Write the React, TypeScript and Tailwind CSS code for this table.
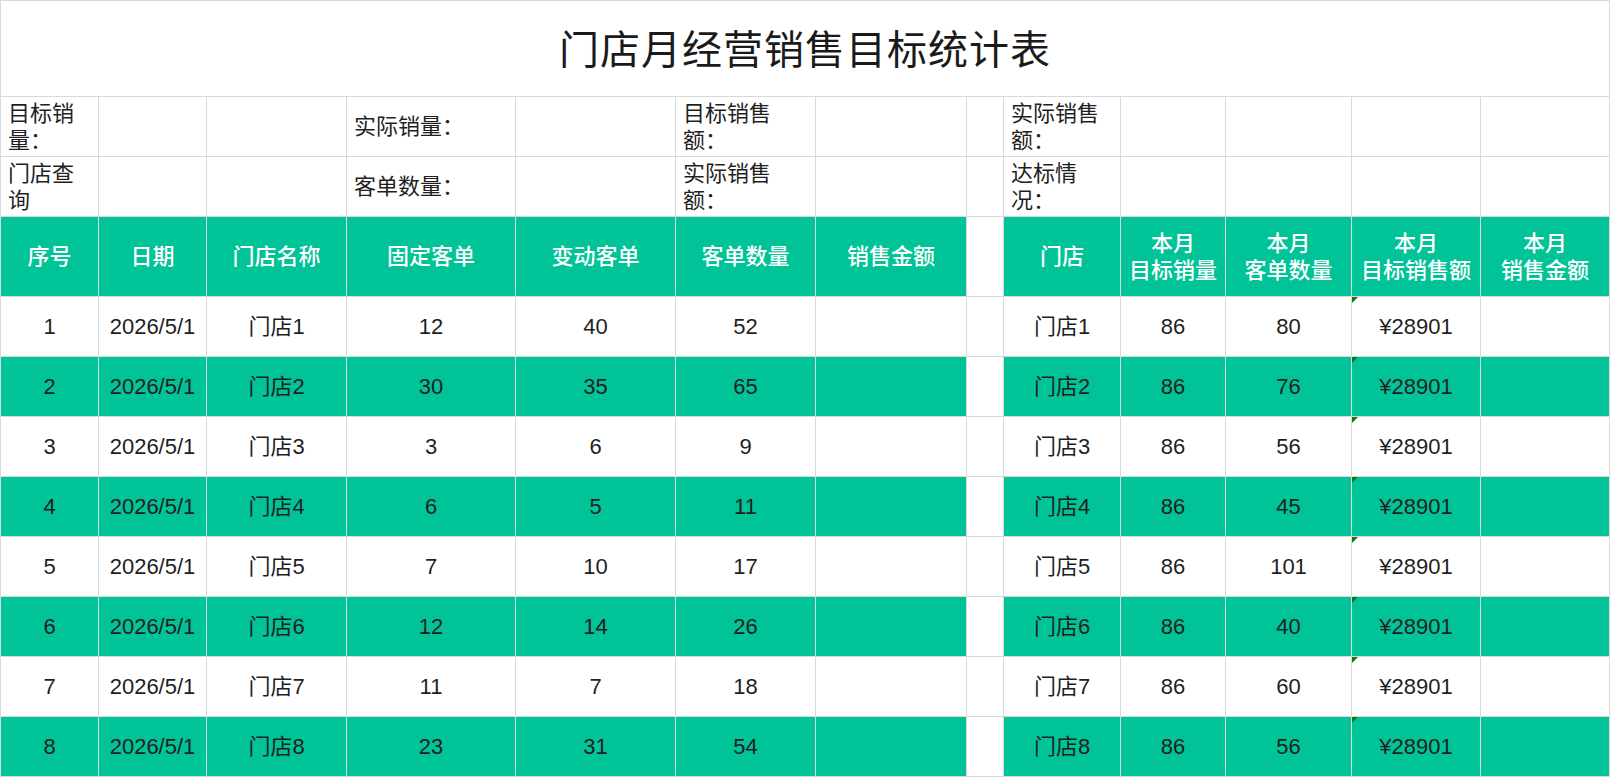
import React from 'react';

const cols =
  'grid-cols-[98px_108px_140px_169px_160px_140px_151px_37px_117px_105px_126px_129px_129px]';

const rows = [
  { no: 1, store: '门店1', fixed: 12, change: 40, count: 52, target: 86, month: 80 },
  { no: 2, store: '门店2', fixed: 30, change: 35, count: 65, target: 86, month: 76 },
  { no: 3, store: '门店3', fixed: 3, change: 6, count: 9, target: 86, month: 56 },
  { no: 4, store: '门店4', fixed: 6, change: 5, count: 11, target: 86, month: 45 },
  { no: 5, store: '门店5', fixed: 7, change: 10, count: 17, target: 86, month: 101 },
  { no: 6, store: '门店6', fixed: 12, change: 14, count: 26, target: 86, month: 40 },
  { no: 7, store: '门店7', fixed: 11, change: 7, count: 18, target: 86, month: 60 },
  { no: 8, store: '门店8', fixed: 23, change: 31, count: 54, target: 86, month: 56 },
];

const headers = ['序号', '日期', '门店名称', '固定客单', '变动客单', '客单数量', '销售金额'];
const rightHeaders = [['门店'], ['本月', '目标销量'], ['本月', '客单数量'], ['本月', '目标销售额'], ['本月', '销售金额']];

function Label({ lines }: { lines?: string[] }) {
  return (
    <div className="border-r border-b border-[#d9d9d9] flex flex-col justify-center pl-[7px] text-[22px] leading-[27px] text-[#1f1f1f]">
      {lines?.map((l) => (
        <span key={l} className="whitespace-nowrap">{l}</span>
      ))}
    </div>
  );
}

function Cell({ children, green, mark }: { children?: React.ReactNode; green?: boolean; mark?: boolean }) {
  return (
    <div
      className={
        'relative border-r border-b border-[#d9d9d9] flex items-center justify-center text-[22px] text-[#1f1f1f] whitespace-nowrap ' +
        (green ? 'bg-[#00c398]' : 'bg-white')
      }
    >
      {mark && (
        <span className="absolute left-0 top-0 w-0 h-0 border-t-[6px] border-r-[6px] border-t-[#0a7d12] border-r-transparent" />
      )}
      {children}
    </div>
  );
}

export default function App() {
  const labelRows: (string[] | undefined)[][] = [
    [['目标销', '量：'], undefined, undefined, ['实际销量：'], undefined, ['目标销售', '额：'], undefined, undefined, ['实际销售', '额：'], undefined, undefined, undefined, undefined],
    [['门店查', '询'], undefined, undefined, ['客单数量：'], undefined, ['实际销售', '额：'], undefined, undefined, ['达标情', '况：'], undefined, undefined, undefined, undefined],
  ];

  return (
    <div
      className="w-[1611px] h-[777px] bg-white overflow-hidden"
      style={{ fontFamily: '"Liberation Sans", "Noto Sans CJK SC", sans-serif' }}
    >
      <div
        className={
          'grid w-[1610px] border-l border-t border-[#d9d9d9] grid-rows-[96px_60px_60px_80px_repeat(8,60px)] ' + cols
        }
      >
        {/* title */}
        <div className="col-span-13 border-r border-b border-[#d9d9d9] flex items-center justify-center pt-[2px] text-[40px] text-[#1a1a1a] tracking-[1px]">
          门店月经营销售目标统计表
        </div>

        {/* label rows */}
        {labelRows.map((r, i) => r.map((lines, j) => <Label key={`l${i}-${j}`} lines={lines} />))}

        {/* header row */}
        {headers.map((h) => (
          <div
            key={h}
            className="border-r border-b border-[#d9d9d9] bg-[#00c398] flex items-center justify-center text-white text-[22px] font-medium"
          >
            {h}
          </div>
        ))}
        <div className="border-r border-b border-[#d9d9d9] bg-white" />
        {rightHeaders.map((h) => (
          <div
            key={h.join('')}
            className="border-r border-b border-[#d9d9d9] bg-[#00c398] flex flex-col items-center justify-center text-white text-[22px] leading-[27px] font-medium"
          >
            {h.map((t) => (
              <span key={t} className="whitespace-nowrap">{t}</span>
            ))}
          </div>
        ))}

        {/* data rows */}
        {rows.map((r) => {
          const g = r.no % 2 === 0;
          return (
            <React.Fragment key={r.no}>
              <Cell green={g}>{r.no}</Cell>
              <Cell green={g}>2026/5/1</Cell>
              <Cell green={g}>{r.store}</Cell>
              <Cell green={g}>{r.fixed}</Cell>
              <Cell green={g}>{r.change}</Cell>
              <Cell green={g}>{r.count}</Cell>
              <Cell green={g} />
              <Cell />
              <Cell green={g}>{r.store}</Cell>
              <Cell green={g}>{r.target}</Cell>
              <Cell green={g}>{r.month}</Cell>
              <Cell green={g} mark>¥28901</Cell>
              <Cell green={g} />
            </React.Fragment>
          );
        })}
      </div>
    </div>
  );
}
